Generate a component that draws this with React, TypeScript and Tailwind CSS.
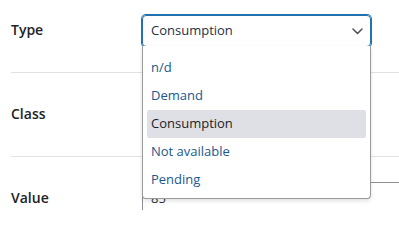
import React from 'react';

const options = ['n/d', 'Demand', 'Consumption', 'Not available', 'Pending'];

const Chevron = () => (
  <svg width="11" height="7" viewBox="0 0 11 7" fill="none">
    <path d="M1 1l4.5 4.5L10 1" stroke="#50575e" strokeWidth="1.6" strokeLinecap="round" strokeLinejoin="round" />
  </svg>
);

const App: React.FC = () => {
  const selected = 'Consumption';

  return (
    <div
      className="w-[399px] h-[210px] overflow-hidden bg-white pl-[11px] text-[14px] text-[#1d2327]"
      style={{ fontFamily: '"Open Sans", "Noto Sans", Arial, sans-serif' }}
    >
      {/* Type row */}
      <div className="flex h-[73px] border-b border-[#e2e2e2]">
        <div className="w-[131px] shrink-0 pt-[20px] font-semibold leading-5">Type</div>
        <div className="relative pt-[15px]">
          <div className="flex h-[32px] w-[229px] items-center justify-between rounded-[4px] border border-[#2271b1] pl-[8px] pr-[7px] shadow-[0_0_0_1px_#2271b1] text-[13px] text-[#1e3146]">
            <span>{selected}</span>
            <Chevron />
          </div>

          {/* open dropdown */}
          <div className="absolute left-0 top-[46px] z-10 w-[229px] rounded-b-[4px] border border-t-0 border-[#9a9a9a] bg-white px-[4px] pt-[8px] pb-[4px] shadow-[0_2px_4px_rgba(0,0,0,0.12)]">
            {options.map((o) => (
              <div
                key={o}
                className={`flex h-[28px] items-center rounded-[2px] pl-[4px] text-[13px] ${
                  o === selected ? 'bg-[#dfdfe6] text-[#1e1e1e]' : 'text-[#19588e]'
                }`}
              >
                {o}
              </div>
            ))}
          </div>
        </div>
      </div>

      {/* Class row */}
      <div className="flex h-[84px] border-b border-[#e2e2e2]">
        <div className="w-[131px] shrink-0 pt-[31px] font-semibold leading-5">Class</div>
        <div />
      </div>

      {/* Value row */}
      <div className="flex h-[84px]">
        <div className="w-[131px] shrink-0 pt-[31px] font-semibold leading-5">Value</div>
        <div className="pt-[25px]">
          <div className="h-[32px] w-[300px] rounded-[4px] border border-[#8c8f94] px-[8px] pt-[5px] text-[13px] leading-5 text-[#2c3338]">
            85
          </div>
        </div>
      </div>
    </div>
  );
};

export default App;
